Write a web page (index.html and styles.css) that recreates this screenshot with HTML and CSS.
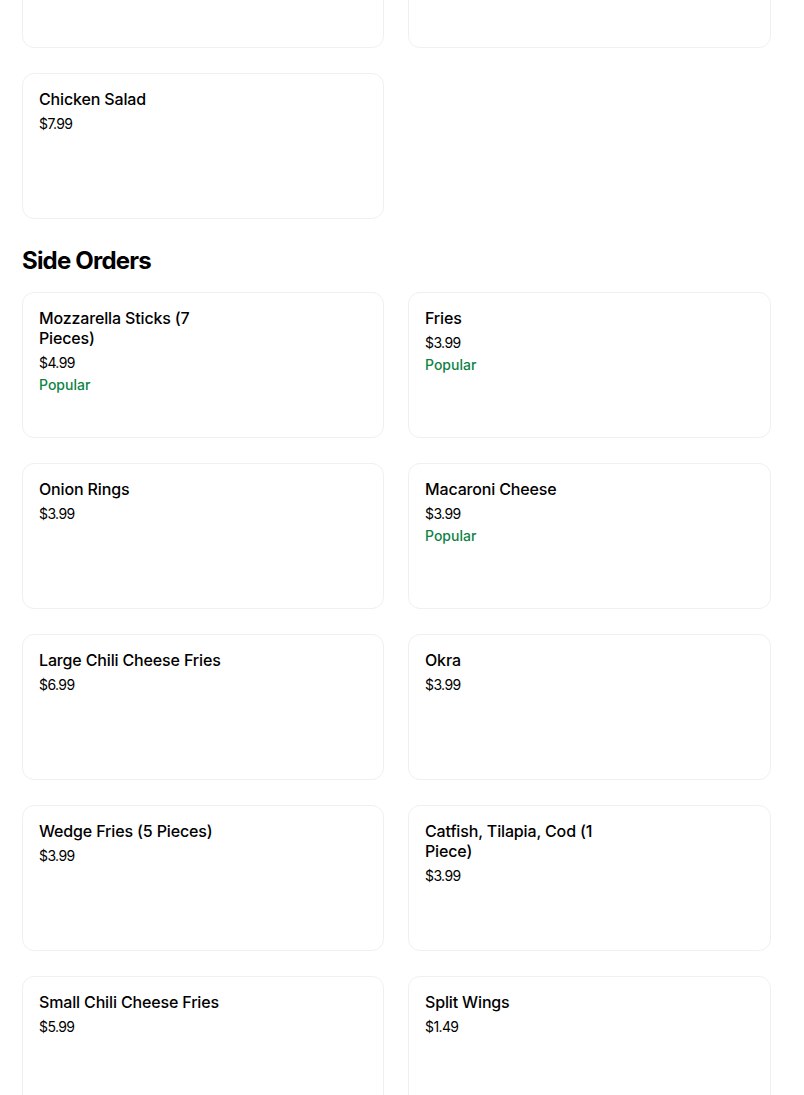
FILE: index.html
```html
<!DOCTYPE html>
<html lang="en">
<head>
<meta charset="utf-8">
<title>Menu</title>
<link rel="stylesheet" href="styles.css">
</head>
<body>
<main class="menu">
  <section class="section section-first">
    <div class="grid">
      <div class="card"></div>
      <div class="card"></div>
      <div class="card">
        <div class="info">
          <div class="title">Chicken Salad</div>
          <div class="price">$7.99</div>
        </div>
      </div>
    </div>
  </section>

  <section class="section">
    <h2 class="heading">Side Orders</h2>
    <div class="grid">
      <div class="card">
        <div class="info">
          <div class="title">Mozzarella Sticks (7 Pieces)</div>
          <div class="price">$4.99</div>
          <div class="tag">Popular</div>
        </div>
      </div>
      <div class="card">
        <div class="info">
          <div class="title">Fries</div>
          <div class="price">$3.99</div>
          <div class="tag">Popular</div>
        </div>
      </div>
      <div class="card">
        <div class="info">
          <div class="title">Onion Rings</div>
          <div class="price">$3.99</div>
        </div>
      </div>
      <div class="card">
        <div class="info">
          <div class="title">Macaroni Cheese</div>
          <div class="price">$3.99</div>
          <div class="tag">Popular</div>
        </div>
      </div>
      <div class="card">
        <div class="info">
          <div class="title">Large Chili Cheese Fries</div>
          <div class="price">$6.99</div>
        </div>
      </div>
      <div class="card">
        <div class="info">
          <div class="title">Okra</div>
          <div class="price">$3.99</div>
        </div>
      </div>
      <div class="card">
        <div class="info">
          <div class="title">Wedge Fries (5 Pieces)</div>
          <div class="price">$3.99</div>
        </div>
      </div>
      <div class="card">
        <div class="info">
          <div class="title">Catfish, Tilapia, Cod (1 Piece)</div>
          <div class="price">$3.99</div>
        </div>
      </div>
      <div class="card">
        <div class="info">
          <div class="title">Small Chili Cheese Fries</div>
          <div class="price">$5.99</div>
        </div>
      </div>
      <div class="card">
        <div class="info">
          <div class="title">Split Wings</div>
          <div class="price">$1.49</div>
        </div>
      </div>
    </div>
  </section>
</main>
</body>
</html>
```

FILE: styles.css
```css
html, body {
  margin: 0;
  padding: 0;
  background: #ffffff;
}

body {
  font-family: Inter, "Liberation Sans", Arial, sans-serif;
  color: #000000;
  overflow: hidden;
}

.menu {
  width: 749px;
  margin-left: 22px;
}

.section-first {
  margin-top: -98px;
}

.grid {
  display: grid;
  grid-template-columns: 362px 363px;
  column-gap: 24px;
  row-gap: 25px;
}

.card {
  box-sizing: border-box;
  height: 146px;
  border: 1px solid #f0f0f0;
  border-radius: 12px;
  padding: 15px 16px;
  background: #ffffff;
}

.info {
  max-width: 200px;
  display: flex;
  flex-direction: column;
}

.title {
  font-size: 16px;
  line-height: 20px;
  font-weight: 500;
  color: #000000;
  letter-spacing: -0.15px;
}

.price {
  margin-top: 5px;
  font-size: 14px;
  line-height: 20px;
  font-weight: 400;
  color: #000000;
  letter-spacing: -0.6px;
}

.tag {
  margin-top: 2px;
  font-size: 14px;
  line-height: 20px;
  font-weight: 500;
  color: #0e8345;
}

.heading {
  margin: 26px 0 15px;
  font-size: 24px;
  line-height: 32px;
  font-weight: 700;
  letter-spacing: -0.8px;
}
```
